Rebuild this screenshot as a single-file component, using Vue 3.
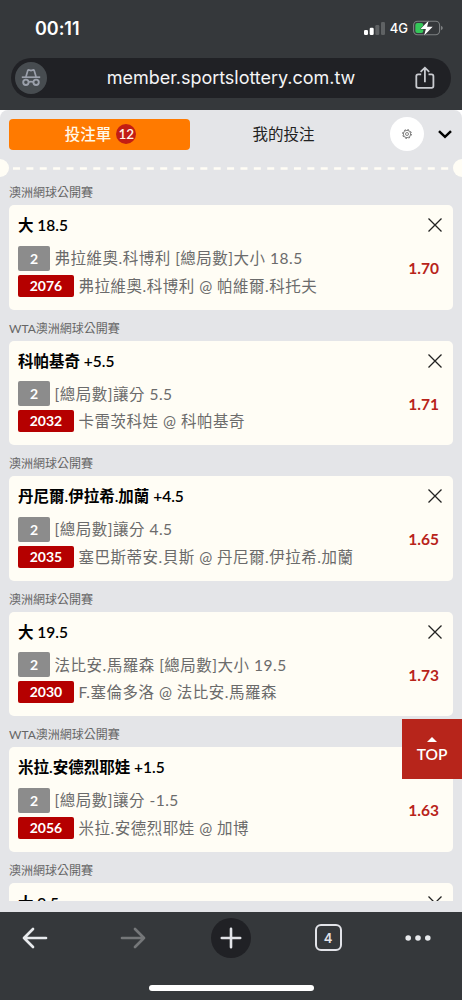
<script setup>
import { ref } from "vue";

const activeTab = ref("slip");

const bets = ref([
  { league: "澳洲網球公開賽", pick: "大 18.5", market: "弗拉維奧.科博利 [總局數]大小 18.5", code: "2076", match: "弗拉維奧.科博利 @ 帕維爾.科托夫", odds: "1.70" },
  { league: "WTA澳洲網球公開賽", pick: "科帕基奇 +5.5", market: "[總局數]讓分 5.5", code: "2032", match: "卡雷茨科娃 @ 科帕基奇", odds: "1.71" },
  { league: "澳洲網球公開賽", pick: "丹尼爾.伊拉希.加蘭 +4.5", market: "[總局數]讓分 4.5", code: "2035", match: "塞巴斯蒂安.貝斯 @ 丹尼爾.伊拉希.加蘭", odds: "1.65" },
  { league: "澳洲網球公開賽", pick: "大 19.5", market: "法比安.馬羅森 [總局數]大小 19.5", code: "2030", match: "F.塞倫多洛 @ 法比安.馬羅森", odds: "1.73" },
  { league: "WTA澳洲網球公開賽", pick: "米拉.安德烈耶娃 +1.5", market: "[總局數]讓分 -1.5", code: "2056", match: "米拉.安德烈耶娃 @ 加博", odds: "1.63" },
  { league: "澳洲網球公開賽", pick: "大 9.5" }
]);

const removeBet = (index) => {
  bets.value.splice(index, 1);
};
</script>

<template>
  <div class="phone">
    <!-- Status bar -->
    <div class="status-bar">
      <span class="clock">00:11</span>
      <div class="status-icons">
        <svg class="signal" width="21" height="13" viewBox="0 0 21 13">
          <rect x="0" y="8" width="4" height="5" rx="1.2" fill="#fff" />
          <rect x="5.7" y="5.8" width="4" height="7.2" rx="1.2" fill="#fff" />
          <rect x="11.3" y="3" width="4" height="10" rx="1.2" fill="#5f6264" />
          <rect x="17" y="0" width="4" height="13" rx="1.2" fill="#5f6264" />
        </svg>
        <span class="network">4G</span>
        <svg class="battery" width="30" height="16" viewBox="0 0 30 16">
          <rect x="0.6" y="1.2" width="26" height="13.6" rx="4" fill="none" stroke="#7d8082" stroke-width="1.1" />
          <path d="M28 5.7v4.6q1.8-.7 1.8-2.3T28 5.7z" fill="#7d8082" />
          <rect x="2.3" y="3" width="8" height="10" rx="2" fill="#35c759" />
          <path d="M15.7 .5 7.5 8.9h5.4l-1.8 6.6 8.6-8.7h-5.6z" fill="#fff" stroke="#35383b" stroke-width="1" paint-order="stroke" />
        </svg>
      </div>
    </div>

    <!-- Address bar -->
    <div class="address-row">
      <div class="address-bar">
        <span class="incognito">
          <svg width="20" height="20" viewBox="0 0 20 20" fill="none" stroke="#9ba0ab">
            <path d="M.8 9.2h18.4" stroke-width="1.7" />
            <path d="M4.9 9 6.8 2.4q.2-.7.9-.5l2.3.6 2.3-.6q.7-.2.9.5L15.1 9" stroke-width="1.7" />
            <circle cx="4.9" cy="14.3" r="2.7" stroke-width="1.9" />
            <circle cx="15.1" cy="14.3" r="2.7" stroke-width="1.9" />
            <path d="M7.7 14.1q2.3-1.1 4.6 0" stroke-width="1.7" />
          </svg>
        </span>
        <span class="url">member.sportslottery.com.tw</span>
        <svg class="share" width="20" height="24" viewBox="0 0 20 24" fill="none" stroke="#c9cbd0" stroke-width="1.8">
          <path d="M6.2 8.4H3.1Q1.3 8.4 1.3 10.2v9.9q0 1.8 1.8 1.8h13.5q1.8 0 1.8-1.8v-9.9q0-1.8-1.8-1.8h-3.1" />
          <path d="M9.9 16.2V2M5.6 5.9l4.3-4.2 4.3 4.2" />
        </svg>
      </div>
    </div>

    <!-- Page -->
    <div class="page">
      <div class="sheet">
        <div class="tabs">
          <button class="tab" :class="{ active: activeTab === 'slip' }" @click="activeTab = 'slip'">
            投注單<span class="count">12</span>
          </button>
          <button class="tab" :class="{ active: activeTab === 'mine' }" @click="activeTab = 'mine'">我的投注</button>
          <button class="settings">
            <svg width="10" height="10" viewBox="0 0 10 10" fill="none" stroke="#555" stroke-width=".7">
              <circle cx="5" cy="5" r="3.7" />
              <circle cx="5" cy="5" r="4.4" stroke-width=".9" stroke-dasharray="1.6 1.856" />
              <circle cx="5" cy="5" r="1.5" />
            </svg>
          </button>
          <svg class="chevron" width="14" height="9" viewBox="0 0 14 9" fill="none" stroke="#000" stroke-width="2.5">
            <path d="M1 1.2l6 5.7 6-5.7" />
          </svg>
        </div>

        <div class="divider">
          <span class="notch left"></span>
          <svg class="dashes" height="3">
            <line x1="0" y1="1.5" x2="100%" y2="1.5" stroke="#fffdf5" stroke-width="2.6" stroke-dasharray="7 6.38" />
          </svg>
          <span class="notch right"></span>
        </div>

        <div class="bet-list">
          <div v-for="(bet, index) in bets" :key="index" class="bet">
            <div class="league">{{ bet.league }}</div>
            <div class="card">
              <div class="info">
                <div class="pick">{{ bet.pick }}</div>
                <div v-if="bet.market" class="line market">
                  <span class="badge grey">2</span>
                  <span class="text">{{ bet.market }}</span>
                </div>
                <div v-if="bet.match" class="line match">
                  <span class="badge red">{{ bet.code }}</span>
                  <span class="text">{{ bet.match }}</span>
                </div>
              </div>
              <div class="side">
                <button class="close" @click="removeBet(index)">
                  <svg width="14" height="14" viewBox="0 0 14 14" stroke="#222" stroke-width="1.3">
                    <path d="M.5 .5l13 13M13.5 .5l-13 13" />
                  </svg>
                </button>
                <span class="odds">{{ bet.odds }}</span>
              </div>
            </div>
          </div>
        </div>
      </div>
      <button class="top-btn">
        <span class="triangle"></span>
        TOP
      </button>
    </div>

    <!-- Browser toolbar -->
    <div class="toolbar">
      <div class="tools">
        <span class="tool">
          <svg width="26" height="22" viewBox="0 0 26 22" fill="none" stroke="#e8eaed" stroke-width="2.7" stroke-linecap="round" stroke-linejoin="round">
            <path d="M24 11H2M11 2l-9 9 9 9" />
          </svg>
        </span>
        <span class="tool">
          <svg width="26" height="22" viewBox="0 0 26 22" fill="none" stroke="#757779" stroke-width="2.7" stroke-linecap="round" stroke-linejoin="round">
            <path d="M2 11h22M15 2l9 9-9 9" />
          </svg>
        </span>
        <span class="tool">
          <span class="new-tab">
            <svg width="22" height="22" viewBox="0 0 22 22" stroke="#e2e3e8" stroke-width="2.6" stroke-linecap="round">
              <path d="M11 1.8v18.4M1.8 11h18.4" />
            </svg>
          </span>
        </span>
        <span class="tool">
          <span class="tab-count">4</span>
        </span>
        <span class="tool menu">
          <svg width="26" height="8" viewBox="0 0 26 8" fill="#e8eaed">
            <circle cx="3.2" cy="4" r="2.8" />
            <circle cx="13" cy="4" r="2.8" />
            <circle cx="22.8" cy="4" r="2.8" />
          </svg>
        </span>
      </div>
      <div class="home-bar"></div>
    </div>
  </div>
</template>

<style>
body {
  margin: 0;
  background: #35383b;
}
</style>

<style scoped>
.phone {
  display: flex;
  flex-direction: column;
  width: 462px;
  height: 1000px;
  overflow: hidden;
  background: #35383b;
  font-family: Lato, "Noto Sans CJK TC", sans-serif;
}

button {
  padding: 0;
  border: none;
  background: none;
  font-family: inherit;
  cursor: pointer;
}

.status-bar {
  display: flex;
  justify-content: space-between;
  align-items: center;
  box-sizing: border-box;
  height: 58px;
  padding: 0 19px 2px 35px;
  color: #fff;
  font-family: Inter, sans-serif;
}

.clock {
  font-size: 18px;
  font-weight: 600;
  letter-spacing: -0.05px;
}

.status-icons {
  display: flex;
  align-items: center;
}

.network {
  margin: 0 5px 0 5px;
  font-size: 13px;
  font-weight: 500;
}

.address-row {
  height: 52px;
  padding: 0 11px;
}

.address-bar {
  display: flex;
  align-items: center;
  box-sizing: border-box;
  height: 40px;
  padding: 0 16px 0 4px;
  border-radius: 20px;
  background: #202125;
}

.incognito {
  display: flex;
  align-items: center;
  justify-content: center;
  width: 32px;
  height: 32px;
  border-radius: 50%;
  background: #474c50;
}

.url {
  flex: 1;
  padding: 0 0 2px;
  color: #f4f4f5;
  font-family: Inter, sans-serif;
  font-size: 18px;
  letter-spacing: -0.03px;
  text-align: center;
}

.page {
  position: relative;
  height: 802px;
  background: #fff;
}

.sheet {
  display: flex;
  flex-direction: column;
  box-sizing: border-box;
  height: 802px;
  padding-bottom: 11px;
  border-radius: 8px 8px 0 0;
  background: #e4e5e8;
}

.tabs {
  display: flex;
  align-items: center;
  height: 48px;
  padding: 0 10px 0 9px;
}

.tab {
  display: flex;
  align-items: center;
  justify-content: center;
  box-sizing: border-box;
  width: 181px;
  height: 31px;
  padding-bottom: 2px;
  border-radius: 4px;
  color: #222;
  font-size: 15.5px;
}

.tab + .tab {
  margin-left: 3px;
}

.tab.active {
  padding-left: 2px;
  background: #ff7a00;
  color: #fff8e8;
  font-weight: 500;
}

.count {
  width: 20px;
  height: 20px;
  margin: 1px 0 0 5px;
  border-radius: 50%;
  background: #c21d14;
  font-size: 13.5px;
  font-weight: 600;
  line-height: 20px;
}

.settings {
  display: flex;
  align-items: center;
  justify-content: center;
  width: 34px;
  height: 34px;
  margin-left: 16px;
  border-radius: 50%;
  background: #fff;
}

.chevron {
  margin: 1px 0 0 14px;
}

.divider {
  display: flex;
  align-items: center;
  height: 19px;
}

.notch {
  width: 9px;
  height: 18px;
  background: #fffdf5;
}

.notch.left {
  border-radius: 0 9px 9px 0;
}

.notch.right {
  border-radius: 9px 0 0 9px;
}

.dashes {
  flex: 1;
  margin: 2px 3px 0 4px;
}

.bet-list {
  flex: 1;
  overflow: hidden;
  padding: 0 9px;
}

.bet {
  height: 135.5px;
}

.league {
  height: 28.3px;
  color: #666;
  font-size: 12px;
  line-height: 32px;
}

.card {
  display: flex;
  justify-content: space-between;
  box-sizing: border-box;
  height: 104.5px;
  padding: 8px 12px 0 9px;
  border-radius: 5px;
  background: #fffdf5;
}

.pick {
  height: 32.4px;
  color: #000;
  font-size: 15.5px;
  font-weight: 600;
  line-height: 24.4px;
}

.line {
  display: flex;
  align-items: center;
  white-space: nowrap;
}

.market {
  height: 25px;
}

.match {
  height: 30px;
}

.badge {
  border-radius: 2px;
  color: #fff;
  font-size: 14px;
  font-weight: 700;
  text-align: center;
}

.badge.grey {
  width: 32px;
  height: 25px;
  background: #8c8c8c;
  line-height: 25px;
}

.badge.red {
  width: 56px;
  height: 22px;
  background: #b50000;
  line-height: 22px;
}

.text {
  margin-left: 4.5px;
  padding-bottom: 2px;
  color: #6b6b6b;
  font-size: 15.5px;
  letter-spacing: 0.5px;
}

.side {
  display: flex;
  flex-direction: column;
  align-items: flex-end;
}

.close {
  display: flex;
  width: 14px;
  height: 14px;
  margin: 5px -1px 0 0;
}

.odds {
  margin: 24px 2px 0 0;
  color: #b8231a;
  font-size: 15.5px;
  font-weight: 700;
  line-height: 24px;
}

/* floats over the list */
.top-btn {
  position: absolute;
  top: 609px;
  right: 0;
  display: flex;
  flex-direction: column;
  align-items: center;
  justify-content: center;
  box-sizing: border-box;
  width: 60px;
  height: 60px;
  padding-top: 6px;
  background: #b7251b;
  color: #fff;
  font-size: 15.5px;
  font-weight: 600;
  line-height: 25px;
}

.triangle {
  border: 5px solid transparent;
  border-top: none;
  border-bottom: 5px solid #fff;
}

.toolbar {
  height: 88px;
}

.tools {
  display: flex;
  align-items: center;
  height: 51px;
  padding-left: 22px;
}

.tool {
  display: flex;
  flex: 0 0 97.6px;
  align-items: center;
}

.tool:nth-child(3) {
  flex-basis: 104px;
  margin-left: -6.5px;
}

.tool.menu {
  flex-basis: 26px;
  margin-left: -7px;
}

.new-tab {
  display: flex;
  align-items: center;
  justify-content: center;
  width: 40px;
  height: 40px;
  border-radius: 50%;
  background: #202125;
}

.tab-count {
  box-sizing: border-box;
  width: 27px;
  height: 27px;
  border: 2px solid #e2e3e8;
  border-radius: 6px;
  color: #e2e3e8;
  font-family: Inter, sans-serif;
  font-size: 13px;
  font-weight: 600;
  line-height: 24px;
  text-align: center;
}

.home-bar {
  width: 165px;
  height: 5.5px;
  margin: 22px auto 0;
  border-radius: 3px;
  background: #fff;
}
</style>
